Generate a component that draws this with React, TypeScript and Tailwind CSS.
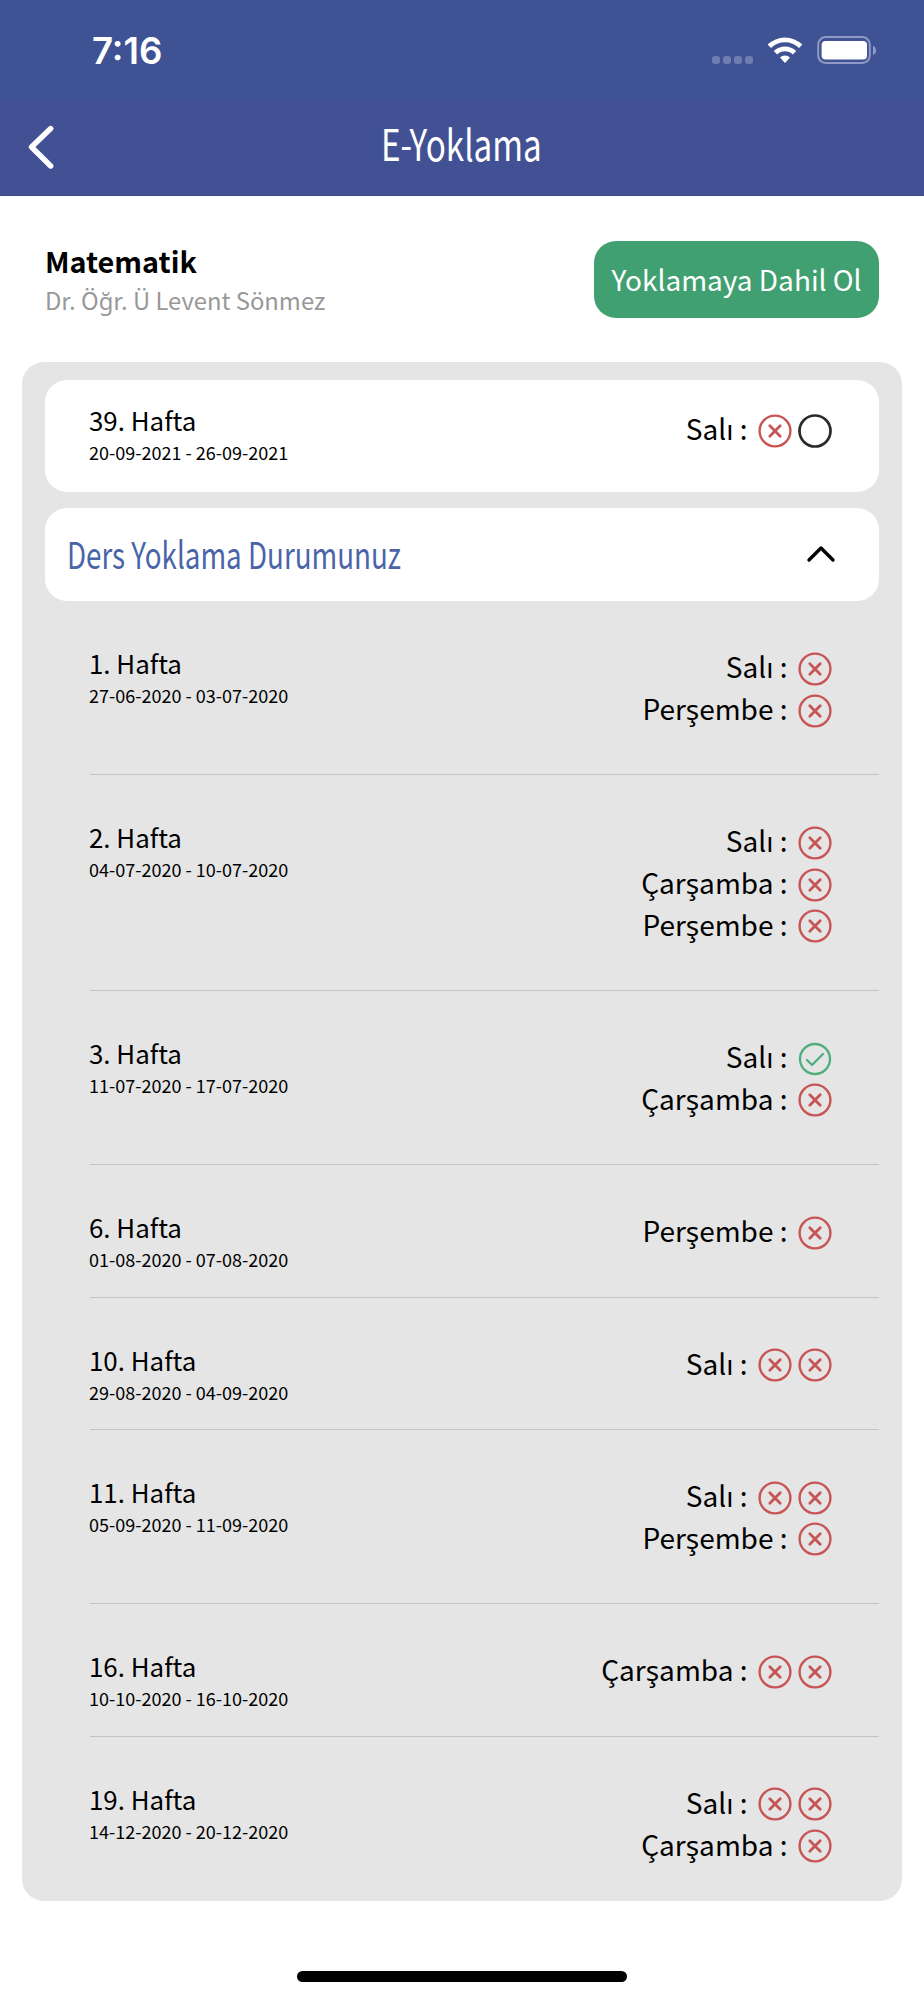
type Mark = "absent" | "present" | "pending";

type Day = { name: string; marks: Mark[] };

type Week = { title: string; range: string; days: Day[] };

const currentWeek: Week = {
  title: "39. Hafta",
  range: "20-09-2021 - 26-09-2021",
  days: [{ name: "Salı", marks: ["absent", "pending"] }],
};

const weeks: Week[] = [
  {
    title: "1. Hafta",
    range: "27-06-2020 - 03-07-2020",
    days: [
      { name: "Salı", marks: ["absent"] },
      { name: "Perşembe", marks: ["absent"] },
    ],
  },
  {
    title: "2. Hafta",
    range: "04-07-2020 - 10-07-2020",
    days: [
      { name: "Salı", marks: ["absent"] },
      { name: "Çarşamba", marks: ["absent"] },
      { name: "Perşembe", marks: ["absent"] },
    ],
  },
  {
    title: "3. Hafta",
    range: "11-07-2020 - 17-07-2020",
    days: [
      { name: "Salı", marks: ["present"] },
      { name: "Çarşamba", marks: ["absent"] },
    ],
  },
  {
    title: "6. Hafta",
    range: "01-08-2020 - 07-08-2020",
    days: [{ name: "Perşembe", marks: ["absent"] }],
  },
  {
    title: "10. Hafta",
    range: "29-08-2020 - 04-09-2020",
    days: [{ name: "Salı", marks: ["absent", "absent"] }],
  },
  {
    title: "11. Hafta",
    range: "05-09-2020 - 11-09-2020",
    days: [
      { name: "Salı", marks: ["absent", "absent"] },
      { name: "Perşembe", marks: ["absent"] },
    ],
  },
  {
    title: "16. Hafta",
    range: "10-10-2020 - 16-10-2020",
    days: [{ name: "Çarşamba", marks: ["absent", "absent"] }],
  },
  {
    title: "19. Hafta",
    range: "14-12-2020 - 20-12-2020",
    days: [
      { name: "Salı", marks: ["absent", "absent"] },
      { name: "Çarşamba", marks: ["absent"] },
    ],
  },
];

const MarkIcon = ({ mark }: { mark: Mark }) => {
  if (mark === "present") {
    return (
      <svg width="34" height="34" viewBox="0 0 34 34" fill="none" stroke="#4fae7d" strokeWidth="2.3" strokeLinecap="round" strokeLinejoin="round">
        <circle cx="17" cy="17" r="15" />
        <path d="M9 18 L14 23 L25 12" />
      </svg>
    );
  }
  if (mark === "pending") {
    return (
      <svg width="34" height="34" viewBox="0 0 34 34" fill="none" stroke="#2b2b2b" strokeWidth="2.7">
        <circle cx="17" cy="17" r="15.5" />
      </svg>
    );
  }
  return (
    <svg width="34" height="34" viewBox="0 0 34 34" fill="none" stroke="#c85556" strokeLinecap="round">
      <circle cx="17" cy="17" r="15.4" strokeWidth="2.4" />
      <path d="M11.8 11.8 L22.2 22.2 M22.2 11.8 L11.8 22.2" strokeWidth="2.8" />
    </svg>
  );
};

const WeekInfo = ({ week }: { week: Week }) => (
  <div className="-mt-px -ml-px flex flex-col whitespace-nowrap">
    <p className="h-8 text-[25.9px] leading-8">{week.title}</p>
    <p className="h-8 text-[18px] leading-8">{week.range}</p>
  </div>
);

const DayList = ({ days }: { days: Day[] }) => (
  <div className="flex flex-col items-end">
    {days.map((day) => (
      <div key={day.name} className="flex h-[41.7px] items-center gap-[6px]">
        <p className="mr-[4px] mb-[5px] text-[28px] leading-8 whitespace-nowrap">{day.name} :</p>
        {day.marks.map((mark, i) => (
          <MarkIcon key={i} mark={mark} />
        ))}
      </div>
    ))}
  </div>
);

const StatusBar = () => (
  <div className="flex h-[100px] items-start justify-between bg-[#3f5294] pr-[47px] pl-[92px]">
    <p className="mt-[30px] font-['Inter'] text-[36.6px] leading-[42px] font-semibold">7:16</p>
    <div className="mt-[36px] flex h-[28px]">
      <div className="mt-[20px] flex gap-[3px]">
        <span className="size-2 rounded-[3px] bg-[#707db0]" />
        <span className="size-2 rounded-[3px] bg-[#707db0]" />
        <span className="size-2 rounded-[3px] bg-[#707db0]" />
        <span className="size-2 rounded-[3px] bg-[#707db0]" />
      </div>
      <svg className="ml-[14px]" width="36" height="28" viewBox="0 0 36 28" fill="white">
        <path d="M0.6 8.6 A25 25 0 0 1 35.4 8.6 L32 12 A20.2 20.2 0 0 0 4 12 Z" />
        <path d="M6.8 15.1 A16 16 0 0 1 29.2 15.1 L25.8 18.5 A11.2 11.2 0 0 0 10.2 18.5 Z" />
        <path d="M13 21.6 A7.2 7.2 0 0 1 23 21.6 L18 27 Z" />
      </svg>
      <svg className="ml-[14px]" width="60" height="28" viewBox="0 0 60 28" fill="none">
        <rect x="1.2" y="1" width="51.6" height="26" rx="7.5" stroke="#8f99c3" strokeWidth="2" />
        <rect x="4.6" y="5" width="45.4" height="18.6" rx="4" fill="white" />
        <path d="M56 9.8 C60.2 11.4 60.2 17.4 56 19 Z" fill="#8f99c3" />
      </svg>
    </div>
  </div>
);

const App = () => {
  return (
    <div className="flex h-[2000px] w-[924px] flex-col bg-white font-['Noto_Sans_CJK_SC','Noto_Sans',sans-serif] text-black">
      <header className="h-[196px] border-b border-[#38478b] bg-[#425194] text-white">
        <StatusBar />
        <div className="grid h-[95px] grid-cols-[1fr_auto_1fr] items-center">
          <svg className="mb-[2px] ml-[26px]" width="30" height="44" viewBox="0 0 30 44" fill="none" stroke="white" strokeWidth="5.4" strokeLinecap="round" strokeLinejoin="round">
            <path d="M24.7 3.5 L5.5 22 L24.7 41" />
          </svg>
          <h1 className="mb-[11px] w-[162px] text-[43px] leading-[56px] whitespace-nowrap">
            <span className="inline-block origin-left scale-x-[0.772]">E-Yoklama</span>
          </h1>
        </div>
      </header>

      <div className="flex h-[166px] items-start justify-between pt-[45px] pr-[45px] pl-[45px]">
        <div className="whitespace-nowrap">
          <h2 className="h-[41px] text-[28.8px] leading-[40px] font-bold">Matematik</h2>
          <p className="h-[36px] text-[23.8px] leading-[36px] text-[#989898]">Dr. Öğr. Ü Levent Sönmez</p>
        </div>
        <button className="h-[76.5px] w-[285px] rounded-[22px] bg-[#41a071] text-[28px] whitespace-nowrap text-white">
          Yoklamaya Dahil Ol
        </button>
      </div>

      <main className="mx-[22px] h-[1539px] rounded-[22px] bg-[#e5e5e5] px-[23px] pt-[18px]">
        <section className="flex h-[111.5px] justify-between rounded-[22px] bg-white pt-[30px] pr-[47.5px] pl-[45px]">
          <div className="-mt-[5px]">
            <WeekInfo week={currentWeek} />
          </div>
          <DayList days={currentWeek.days} />
        </section>

        <section className="mt-4 flex h-[93.5px] items-center justify-between rounded-[22px] bg-white pr-[42px] pl-[22px]">
          <p className="mb-[3px] w-[333px] text-[37px] leading-[50px] whitespace-nowrap text-[#4a64a8]">
            <span className="inline-block origin-left scale-x-[0.75]">Ders Yoklama Durumunuz</span>
          </p>
          <svg width="32" height="20" viewBox="0 0 32 20" fill="none" stroke="black" strokeWidth="3.4" strokeLinecap="round" strokeLinejoin="round">
            <path d="M4 16 L16 4 L28 16" />
          </svg>
        </section>

        <ul className="ml-[45px]">
          {weeks.map((week) => (
            <li key={week.title} className="flex justify-between border-b border-[#c3c3c3] pt-[47px] pr-[47.5px] pb-[42.75px] last:border-b-0">
              {/* the dates may run into the bottom padding on one-day weeks */}
              <div className="h-10">
                <WeekInfo week={week} />
              </div>
              <DayList days={week.days} />
            </li>
          ))}
        </ul>
      </main>

      <div className="mx-auto mt-[70px] h-[11px] w-[330px] rounded-full bg-black" />
    </div>
  );
};

export default App;
